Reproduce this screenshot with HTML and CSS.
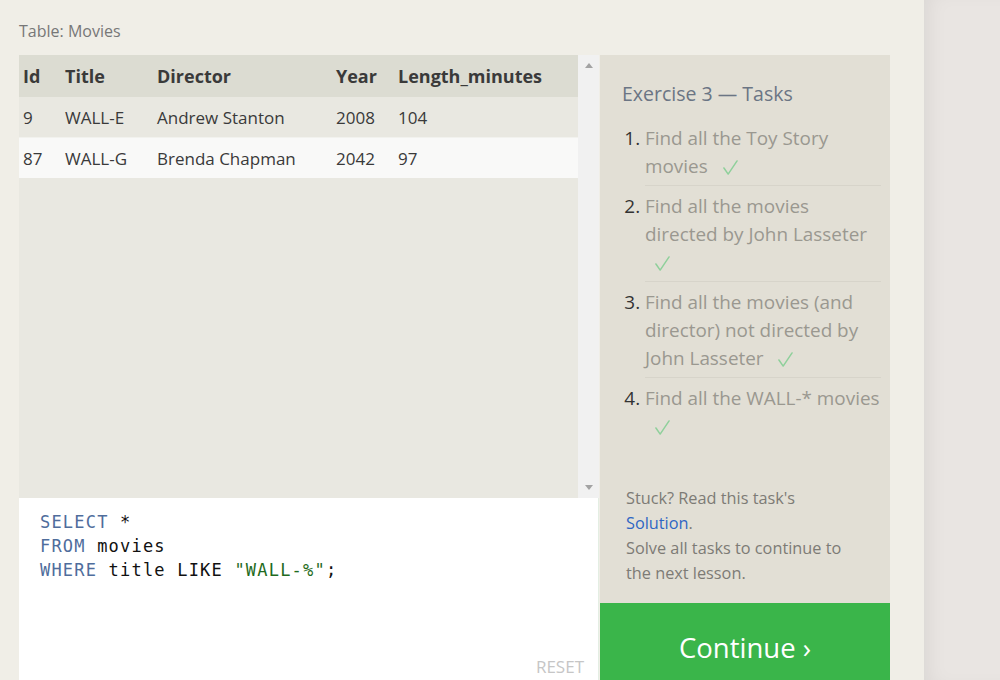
FILE: index.html
```html
<!DOCTYPE html>
<html lang="en">
<head>
<meta charset="utf-8">
<title>SQL Lesson — Movies</title>
<link rel="stylesheet" href="styles.css">
</head>
<body>
<div class="page">
  <main class="main">
    <div class="table-title">Table: Movies</div>
    <div class="workspace">
      <div class="left">
        <div class="results">
          <div class="results-body">
            <table class="grid">
              <colgroup>
                <col class="c-id"><col class="c-title"><col class="c-dir"><col class="c-year"><col>
              </colgroup>
              <thead>
                <tr><th>Id</th><th>Title</th><th>Director</th><th>Year</th><th>Length_minutes</th></tr>
              </thead>
              <tbody>
                <tr class="odd"><td>9</td><td>WALL-E</td><td>Andrew Stanton</td><td>2008</td><td>104</td></tr>
                <tr class="even"><td>87</td><td>WALL-G</td><td>Brenda Chapman</td><td>2042</td><td>97</td></tr>
              </tbody>
            </table>
          </div>
          <div class="scrollbar">
            <span class="arrow up"></span>
            <span class="arrow down"></span>
          </div>
        </div>
        <div class="editor">
<pre class="code"><span class="kw">SELECT</span> *
<span class="kw">FROM</span> movies
<span class="kw">WHERE</span> title LIKE <span class="str">"WALL-%"</span>;</pre>
          <span class="reset">RESET</span>
        </div>
      </div>
      <div class="right">
        <div class="tasks">
          <h2 class="tasks-title">Exercise 3 — Tasks</h2>
          <ol class="task-list">
            <li>Find all the Toy Story movies <svg class="check" viewBox="0 0 16 16" aria-label="done"><path d="M1 8.5 L5.5 15 L15 1"/></svg></li>
            <li>Find all the movies directed by John Lasseter <svg class="check" viewBox="0 0 16 16" aria-label="done"><path d="M1 8.5 L5.5 15 L15 1"/></svg></li>
            <li>Find all the movies (and director) not directed by John Lasseter <svg class="check" viewBox="0 0 16 16" aria-label="done"><path d="M1 8.5 L5.5 15 L15 1"/></svg></li>
            <li>Find all the WALL-* movies <svg class="check" viewBox="0 0 16 16" aria-label="done"><path d="M1 8.5 L5.5 15 L15 1"/></svg></li>
          </ol>
          <div class="help">
            <p>Stuck? Read this task's <a class="link" href="#">Solution</a>.</p>
            <p>Solve all tasks to continue to the next lesson.</p>
          </div>
        </div>
        <div class="continue">Continue ›</div>
      </div>
    </div>
  </main>
  <div class="side"></div>
</div>
</body>
</html>
```

FILE: styles.css
```css
html, body {
  margin: 0;
  padding: 0;
  height: 680px;
  overflow: hidden;
}
body {
  font-family: "Open Sans", "Noto Sans", sans-serif;
  color: #333;
  background: #e9e5e2;
}
.page {
  display: flex;
  height: 680px;
}
.main {
  width: 924px;
  flex: none;
  background: #f0eee7;
  padding-left: 19px;
  box-sizing: border-box;
}
.side {
  flex: 1;
  background: #e9e5e2;
  box-shadow: inset 14px 0 22px -12px rgba(0, 0, 0, 0.08);
}
.table-title {
  font-size: 16px;
  color: #777;
  height: 55px;
  line-height: 20px;
  padding-top: 21px;
  box-sizing: border-box;
}
.workspace {
  display: flex;
}
.left {
  width: 580px;
  display: flex;
  flex-direction: column;
}
.right {
  width: 290px;
  margin-left: 1px;
  display: flex;
  flex-direction: column;
}
.results {
  height: 443px;
  display: flex;
  background: #e9e8e1;
}
.results-body {
  flex: 1;
}
.grid {
  width: 100%;
  border-collapse: collapse;
  font-size: 17px;
}
.c-id { width: 42px; }
.c-title { width: 92px; }
.c-dir { width: 179px; }
.c-year { width: 62px; }
.grid th {
  text-align: left;
  font-weight: 700;
  font-size: 18px;
  color: #3a3a3a;
  background: #dcdcd2;
  height: 42px;
  padding: 0 0 0 4px;
}
.grid td {
  height: 40px;
  padding: 0 0 0 4px;
  color: #3a3a3a;
}
.grid tr.odd td { background: #e9e8e1; }
.grid tr.even td { background: #f9f9f8; border-top: 1px solid #f2f2ee; }
.scrollbar {
  width: 21px;
  background: #f1f1f1;
  display: flex;
  flex-direction: column;
  justify-content: space-between;
  align-items: center;
  padding: 8px 0;
  box-sizing: border-box;
}
.arrow {
  width: 0;
  height: 0;
  border-left: 4px solid transparent;
  border-right: 4px solid transparent;
}
.arrow.up { border-bottom: 5px solid #a3a3a3; }
.arrow.down { border-top: 5px solid #a3a3a3; }
.editor {
  height: 182px;
  background: #fff;
  border-right: 1px solid #e4eee3;
  display: flex;
  flex-direction: column;
  padding: 12px 14px 4px 21px;
  box-sizing: border-box;
}
.code {
  margin: 0;
  font-family: "DejaVu Sans Mono", monospace;
  font-size: 17px;
  letter-spacing: 1.2px;
  line-height: 24px;
  color: #111;
}
.kw { color: #4f6d9c; }
.str { color: #1f6b21; }
.reset {
  margin-top: auto;
  align-self: flex-end;
  font-size: 17px;
  line-height: 18px;
  color: #c6c6c6;
}
.tasks {
  height: 548px;
  background: #e2dfd5;
  padding: 25px 9px 17px 22px;
  box-sizing: border-box;
  display: flex;
  flex-direction: column;
}
.tasks-title {
  margin: 0 0 10px;
  font-size: 19.5px;
  font-weight: 400;
  line-height: 28px;
  color: #6b7584;
}
.task-list {
  margin: 0;
  padding: 0 0 0 23px;
}
.task-list li {
  font-size: 18.9px;
  line-height: 28px;
  color: #9a9890;
  padding: 6px 0 5px;
  border-bottom: 1px solid #d7d4ca;
}
.task-list li:last-child { border-bottom: none; }
.task-list li::marker { color: #333; }
.check {
  width: 15px;
  height: 15px;
  margin-left: 10px;
  vertical-align: -2px;
  fill: none;
  stroke: #8fd09b;
  stroke-width: 1.6;
  stroke-linecap: round;
  stroke-linejoin: round;
}
.help {
  margin-top: auto;
  margin-left: 4px;
  padding-right: 28px;
  font-size: 16.3px;
  line-height: 25px;
  color: #7d7b75;
}
.help p { margin: 0; }
.link {
  color: #2f66c4;
  text-decoration: none;
}
.continue {
  height: 88px;
  background: #3ab54a;
  color: #fff;
  font-size: 27.5px;
  display: flex;
  align-items: center;
  justify-content: center;
}
```
